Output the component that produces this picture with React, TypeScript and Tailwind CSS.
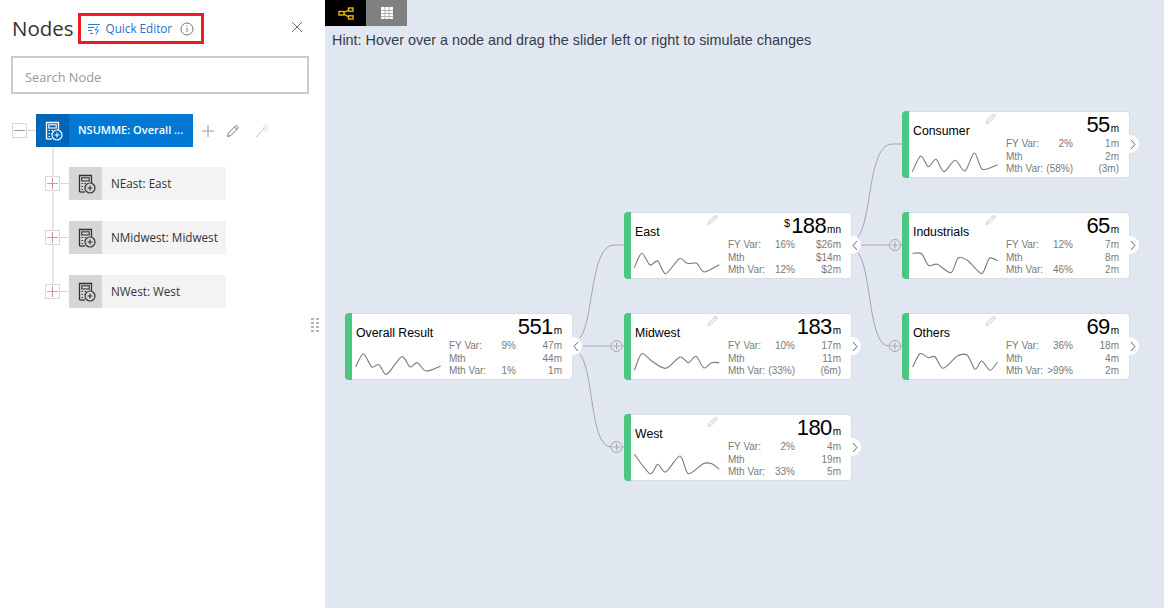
import React from "react";

type Row = [string, string, string];
type NodeData = {
  title: string; value: string; unit: string; prefix?: string; x: number; y: number;
  rows: Row[]; open?: boolean; noEdit?: boolean; ox: number; oy: number; pts: number[][];
};

function smooth(pts: number[][]) {
  let d = `M${pts[0][0]} ${pts[0][1]}`;
  for (let i = 0; i < pts.length - 1; i++) {
    const p0 = pts[Math.max(0, i - 1)], p1 = pts[i], p2 = pts[i + 1], p3 = pts[Math.min(pts.length - 1, i + 2)];
    const k = 0.14;
    d += ` C${(p1[0] + (p2[0] - p0[0]) * k).toFixed(1)} ${(p1[1] + (p2[1] - p0[1]) * k).toFixed(1)} ${(p2[0] - (p3[0] - p1[0]) * k).toFixed(1)} ${(p2[1] - (p3[1] - p1[1]) * k).toFixed(1)} ${p2[0].toFixed(1)} ${p2[1].toFixed(1)}`;
  }
  return d;
}

const nodes: NodeData[] = [
  { title: "Overall Result", value: "551", unit: "m", x: 345, y: 313, open: true, noEdit: true, ox: 15, oy: 24,
    rows: [["FY Var:", "9%", "47m"], ["Mth", "", "44m"], ["Mth Var:", "1%", "1m"]],
    pts: [[47,183],[70,143],[95,183],[117,176],[140,205],[185,152],[210,183],[232,170],[258,195],[302,180]] },
  { title: "East", value: "188", unit: "mn", prefix: "$", x: 624, y: 212, open: true, ox: 102, oy: 21,
    rows: [["FY Var:", "16%", "$26m"], ["Mth", "", "$14m"], ["Mth Var:", "12%", "$2m"]],
    pts: [[133,185],[155,142],[180,177],[203,165],[227,203],[268,158],[292,172],[320,172],[342,198],[388,176]] },
  { title: "Midwest", value: "183", unit: "m", x: 624, y: 313, ox: 72, oy: 24,
    rows: [["FY Var:", "10%", "17m"], ["Mth", "", "11m"], ["Mth Var:", "(33%)", "(6m)"]],
    pts: [[103,193],[125,143],[155,165],[197,187],[240,153],[265,170],[288,151],[312,186],[335,170],[358,170]] },
  { title: "West", value: "180", unit: "m", x: 624, y: 414, ox: 72, oy: 327,
    rows: [["FY Var:", "2%", "4m"], ["Mth", "", "19m"], ["Mth Var:", "33%", "5m"]],
    pts: [[103,445],[150,503],[173,475],[197,498],[240,450],[265,503],[310,473],[335,473],[358,490]] },
  { title: "Consumer", value: "55", unit: "m", x: 902, y: 111, ox: 156, oy: 18,
    rows: [["FY Var:", "2%", "1m"], ["Mth", "", "2m"], ["Mth Var:", "(58%)", "(3m)"]],
    pts: [[187,197],[212,150],[235,182],[258,160],[282,197],[315,163],[345,195],[373,140],[397,190],[443,176]] },
  { title: "Industrials", value: "65", unit: "m", x: 902, y: 212, ox: 66, oy: 21,
    rows: [["FY Var:", "12%", "7m"], ["Mth", "", "8m"], ["Mth Var:", "46%", "2m"]],
    pts: [[98,142],[125,143],[145,178],[172,175],[213,200],[235,155],[265,165],[305,203],[328,157],[353,164]] },
  { title: "Others", value: "69", unit: "m", x: 902, y: 313, ox: 66, oy: 324,
    rows: [["FY Var:", "36%", "18m"], ["Mth", "", "4m"], ["Mth Var:", ">99%", "2m"]],
    pts: [[98,483],[120,443],[145,455],[165,452],[190,487],[232,450],[262,448],[285,490],[305,465],[330,493],[353,468]] },
];

function Card({ n }: { n: NodeData }) {
  const local = n.pts.map(([a, b]) => [(a - n.ox) / 3, (b - n.oy) / 3]);
  return (
    <div
      className="absolute flex h-[67px] w-[228px] rounded-[4px] bg-white border-y border-r border-[#d8dde6]"
      style={{ left: n.x - 325, top: n.y }}
    >
      <div className="w-[7px] h-[67px] -my-px shrink-0 rounded-l-[4px] bg-[#4cc781]" />
      <div className="relative w-[97px] shrink-0">
        <div className="pl-[4px] pt-[12px] text-[12.3px] leading-[14px] text-black whitespace-nowrap">{n.title}</div>
        <svg className="absolute -left-[7px] top-0 overflow-visible" width="104" height="65" fill="none">
          <path d={smooth(local)} stroke="#7a7a7a" strokeWidth="1.1" />
          {!n.noEdit && (
            <g transform="translate(83 1)" stroke="#cfcfcf" strokeWidth="1" fill="#f4f4f4">
              <path d="M1 10.5 L2 7.5 L8.5 1 L10.5 3 L4 9.5 Z" />
              <path d="M7.5 2 L9.5 4" />
            </g>
          )}
        </svg>
      </div>
      <div className="flex-1 flex flex-col pr-[10px]">
        <div className="flex justify-end items-baseline h-[25px] text-black leading-[25px]">
          {n.prefix && <span className="self-start text-[11px] leading-[20px] mr-px">{n.prefix}</span>}
          <span className="text-[22px] tracking-[-0.6px]">{n.value}</span>
          <span className="text-[10px] ml-[1px]">{n.unit}</span>
        </div>
        <div className="flex flex-col mt-[1px] text-[10px] leading-[12.5px] text-[#7a7a7a]">
          {n.rows.map((r, i) => (
            <div key={i} className="flex">
              <span className="w-[67px] shrink-0 flex justify-between">
                <span>{r[0]}</span>
                <span>{r[1]}</span>
              </span>
              <span className="flex-1 text-right">{r[2]}</span>
            </div>
          ))}
        </div>
      </div>
      <div className="absolute -right-[10px] top-[23px] flex h-[18px] w-[10px] items-center rounded-r-[9px] bg-white pl-[1px]">
        <svg width="6" height="11" viewBox="0 0 6 11" fill="none" stroke="#666" strokeWidth="1">
          <path d={n.open ? "M5 1 L1 5.5 L5 10" : "M1 1 L5 5.5 L1 10"} />
        </svg>
      </div>
    </div>
  );
}

function CalcIcon({ color, bg }: { color: string; bg: string }) {
  return (
    <svg width="20" height="20" viewBox="0 0 20 20" fill="none">
      <path d="M3.5 18 V1.5 H15.5 V10" stroke={color} strokeWidth="1.3" />
      <path d="M3.5 18 H9" stroke={color} strokeWidth="1.3" />
      <rect x="5.8" y="3.8" width="7.4" height="3.2" stroke={color} strokeWidth="1.1" />
      <path d="M5.5 9.5h1.5M8.5 9.5h1.5M5.5 12.5h1.5M8.5 12.5h1M5.5 15.5h1.5" stroke={color} strokeWidth="1.2" />
      <circle cx="14" cy="14" r="5" fill={bg} stroke={color} strokeWidth="1.2" />
      <path d="M14 11.5v5M11.5 14h5" stroke={color} strokeWidth="1.1" />
    </svg>
  );
}

function Expand({ minus }: { minus?: boolean }) {
  return (
    <span className="relative flex h-[15px] w-[15px] shrink-0 items-center justify-center border border-[#d9d9d9] bg-white">
      <span className={`h-px w-[11px] ${minus ? "bg-[#999]" : "bg-[#c9a0a0]"}`} />
      {!minus && <span className="absolute h-[11px] w-px bg-[#cf8f8f]" />}
    </span>
  );
}

function TreeChild({ label }: { label: string }) {
  return (
    <div className="flex items-center">
      <Expand />
      <span className="h-px w-[9px] bg-[#d9d9d9]" />
      <div className="flex h-[33px] w-[157px] items-center bg-[#f3f3f3]">
        <span className="flex h-[33px] w-[33px] items-center justify-center bg-[#d6d6d6]">
          <CalcIcon color="#333" bg="#d6d6d6" />
        </span>
        <span className="ml-[9px] text-[11.7px] text-[#333] whitespace-nowrap">{label}</span>
      </div>
    </div>
  );
}

function Connector({ d }: { d: string }) {
  return <path d={d} stroke="#a6a6a6" strokeWidth="1" fill="none" />;
}

function Plus({ x, y }: { x: number; y: number }) {
  return (
    <g stroke="#a6a6a6" strokeWidth="1">
      <circle cx={x} cy={y} r="5.5" fill="#e1e7f0" />
      <path d={`M${x - 3.5} ${y}H${x + 3.5}M${x} ${y - 3.5}V${y + 3.5}`} />
    </g>
  );
}

export default function App() {
  return (
    <div className="flex h-[608px] w-[1164px] overflow-hidden bg-white" style={{ fontFamily: '"Open Sans", sans-serif' }}>
      <aside className="relative w-[325px] shrink-0 bg-white pl-[11px] pr-[16px]">
        <header className="flex h-[56px] items-start">
          <h1 className="ml-px mt-[13px] text-[20.5px] leading-[30px] text-[#333]">Nodes</h1>
          <div className="ml-[4px] mt-[13px] flex h-[31px] w-[126px] items-center border-[3px] border-[#ed1c24] pl-[6px]">
            <svg width="15" height="14" viewBox="0 0 15 14" fill="none" stroke="#2b7cd3" strokeWidth="1">
              <path d="M1 2.5H13M1 5.5H7M1 8.5H5M3 11.5H6" />
              <path d="M11 4 L8 8 H11.5 L9 12.5" />
            </svg>
            <span className="ml-[4px] pt-px text-[11.7px] text-[#2b6fc7]">Quick Editor</span>
            <svg className="ml-[8px]" width="14" height="14" viewBox="0 0 14 14" fill="none" stroke="#777" strokeWidth="1">
              <circle cx="7" cy="7" r="6" />
              <path d="M7 6v4M7 3.8v1" />
            </svg>
          </div>
          <svg className="ml-auto mt-[21px] mr-[6px]" width="12" height="12" viewBox="0 0 12 12" stroke="#666" strokeWidth="1">
            <path d="M1 1L11 11M11 1L1 11" />
          </svg>
        </header>
        <div className="flex h-[38px] w-[298px] items-center border-2 border-[#cccccc] pl-[12px] pt-[5px] text-[12.8px] text-[#999]">
          Search Node
        </div>
        <div className="relative mt-[20px]">
          <span className="absolute left-[41px] top-[33px] h-[145px] w-[2px] bg-[#e6e6e6]" />
          <div className="flex items-center pl-px">
            <Expand minus />
            <span className="h-px w-[9px] bg-[#d9d9d9]" />
            <div className="flex h-[33px] w-[157px] items-center bg-[#0078d4]">
              <span className="flex h-[33px] w-[33px] items-center justify-center bg-[#0067b8]">
                <CalcIcon color="#fff" bg="#0067b8" />
              </span>
              <span className="ml-[9px] text-[11px] font-semibold text-white whitespace-nowrap">NSUMME: Overall ...</span>
            </div>
            <svg className="ml-[8px]" width="14" height="14" viewBox="0 0 14 14" stroke="#999" strokeWidth="1">
              <path d="M7 1V13M1 7H13" />
            </svg>
            <svg className="ml-[11px]" width="14" height="14" viewBox="0 0 14 14" fill="none" stroke="#8a6a7a" strokeWidth="1">
              <path d="M1.5 12.5 L2.5 9 L9.5 2 C10.5 1 12.8 3.2 12 4.2 L5 11.5 Z" />
              <path d="M8.5 3 L11 5.5" />
            </svg>
            <svg className="ml-[15px]" width="14" height="14" viewBox="0 0 14 14" fill="none" stroke="#c8c0b8" strokeWidth="1">
              <path d="M1 13 L9 5" />
              <path d="M10.5 1v2M10.5 5v2M8 4h1.5M11.5 4H13" />
            </svg>
          </div>
          <div className="mt-[20px] flex flex-col gap-[21px] pl-[34px]">
            <TreeChild label="NEast: East" />
            <TreeChild label="NMidwest: Midwest" />
            <TreeChild label="NWest: West" />
          </div>
        </div>
        <div className="absolute left-[311px] top-[318px] grid grid-cols-2 gap-x-[2px] gap-y-[2px]">
          {Array.from({ length: 8 }).map((_, i) => (
            <span key={i} className="h-[2px] w-[3px] bg-[#b5b5b5]" />
          ))}
        </div>
      </aside>
      <main className="relative flex-1 bg-[#e1e7f0]" style={{ fontFamily: '"Liberation Sans", Arial, sans-serif' }}>
        <div className="flex h-[26px]">
          <div className="flex h-[26px] w-[41px] items-center justify-center bg-black">
            <svg width="16" height="13" viewBox="0 0 16 13" fill="none" stroke="#f0b400" strokeWidth="1.4">
              <rect x="1" y="4.5" width="5" height="3.5" />
              <rect x="10.5" y="1" width="4.5" height="3.2" />
              <rect x="10.5" y="8.8" width="4.5" height="3.2" />
              <path d="M6 5.5L10.5 3M6 7L10.5 10" />
            </svg>
          </div>
          <div className="flex h-[26px] w-[41px] items-center justify-center bg-[#808080]">
            <svg width="12" height="12" viewBox="0 0 12 12">
              <rect width="12" height="12" fill="#fff" />
              <path d="M0 3.5H12M0 6.5H12M0 9.5H12M4 0V12M8 0V12" stroke="#b0b0b0" strokeWidth="1" />
            </svg>
          </div>
        </div>
        <p className="ml-[7px] mt-[5px] text-[14.4px] leading-[18px] text-[#333c4a]">
          Hint: Hover over a node and drag the slider left or right to simulate changes
        </p>
        <svg className="absolute left-0 top-0" width="839" height="608" viewBox="325 0 839 608" fill="none">
          <Connector d="M583 346H611" />
          <Connector d="M580 338C594 320 590 245 614 245H624" />
          <Connector d="M580 354C594 372 590 447 611 447" />
          <Connector d="M860 245H889" />
          <Connector d="M858 237C872 220 868 144 892 144H902" />
          <Connector d="M858 253C872 270 868 346 889 346" />
          <Connector d="M621 346H624M621 447H624M900 245H902M900 346H902" />
          <Plus x={616.5} y={346} />
          <Plus x={616.5} y={447} />
          <Plus x={895} y={245} />
          <Plus x={895} y={346} />
        </svg>
        {nodes.map((n) => (
          <Card key={n.title} n={n} />
        ))}
      </main>
    </div>
  );
}
